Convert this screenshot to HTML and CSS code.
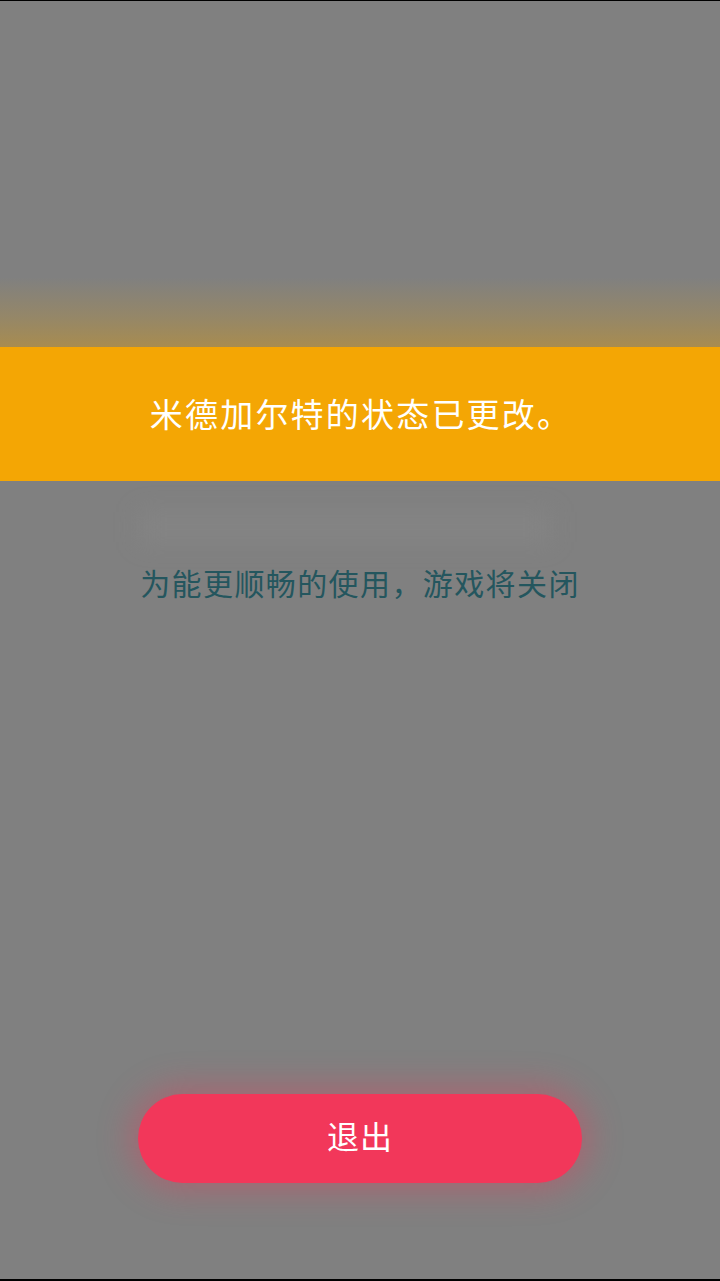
FILE: index.html
```html
<!DOCTYPE html>
<html lang="zh-CN">
<head>
<meta charset="utf-8">
<title>米德加尔特</title>
<link rel="stylesheet" href="styles.css">
</head>
<body>
<div class="screen">
  <div class="glow"></div>
  <div class="banner">米德加尔特的状态已更改。</div>
  <div class="message">为能更顺畅的使用，游戏将关闭</div>
  <div class="spacer"></div>
  <div class="actions">
    <button class="exit-btn">退出</button>
  </div>
</div>
</body>
</html>
```

FILE: styles.css
```css
html, body {
  margin: 0;
  padding: 0;
  background: #808080;
}
.screen {
  width: 720px;
  height: 1281px;
  box-sizing: border-box;
  border-top: 1px solid #000;
  border-bottom: 2px solid #000;
  background: #808080;
  display: flex;
  flex-direction: column;
  font-family: "Noto Sans CJK SC", "Noto Sans", sans-serif;
}
.glow {
  height: 70px;
  margin-top: 276px;
  background: linear-gradient(to bottom, rgba(164,140,86,0) 0%, rgba(164,140,86,0.55) 55%, rgba(168,140,80,1) 100%);
}
.banner {
  height: 134px;
  background: #f4a604;
  color: #fff;
  font-size: 33px;
  font-weight: 400;
  letter-spacing: 2.2px;
  display: flex;
  align-items: center;
  justify-content: center;
  padding-left: 2px;
  box-sizing: border-box;
  padding-bottom: 2px;
}
.message {
  margin: 81px auto 0;
  line-height: 40px;
  font-size: 30px;
  font-weight: 400;
  letter-spacing: 1.4px;
  color: #24565e;
  text-align: center;
  position: relative;
}
.message::before {
  content: "";
  position: absolute;
  left: 0;
  right: 30px;
  top: -50px;
  height: 30px;
  background: rgba(140,140,140,0.35);
  filter: blur(12px);
}
.spacer {
  flex: 1;
}
.actions {
  display: flex;
  justify-content: center;
  margin-bottom: 96px;
}
.exit-btn {
  width: 444px;
  height: 89px;
  border: none;
  border-radius: 45px;
  background: #f2375a;
  color: #fff;
  font-family: "Noto Sans CJK SC", "Noto Sans", sans-serif;
  font-size: 32px;
  font-weight: 400;
  letter-spacing: 1px;
  box-shadow: 0 0 32px 8px rgba(242,55,90,0.35);
  padding: 0 0 8px 0;
}
```
